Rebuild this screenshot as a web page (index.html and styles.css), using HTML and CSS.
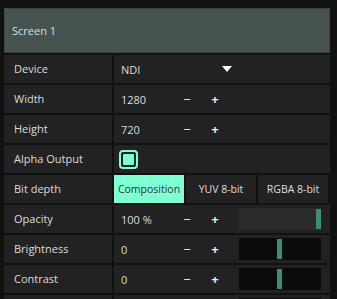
FILE: index.html
```html
<!DOCTYPE html>
<html lang="en">
<head>
  <meta charset="UTF-8">
  <title>Screen 1</title>
  <link rel="stylesheet" href="styles.css">
</head>
<body>
  <div class="panel">
    <div class="header">Screen 1</div>

    <div class="rows">
      <div class="row">
        <div class="label">Device</div>
        <div class="value">
          <span class="num">NDI</span>
          <svg class="caret" width="10" height="6" viewBox="0 0 10 6"><path d="M0 0 H10 L5 6 Z" fill="#fff"/></svg>
        </div>
      </div>

      <div class="row">
        <div class="label">Width</div>
        <div class="value">
          <span class="num">1280</span>
          <span class="step">&minus;</span>
          <span class="step plus">+</span>
        </div>
      </div>

      <div class="row">
        <div class="label">Height</div>
        <div class="value">
          <span class="num">720</span>
          <span class="step">&minus;</span>
          <span class="step plus">+</span>
        </div>
      </div>

      <div class="row">
        <div class="label">Alpha Output</div>
        <div class="value">
          <span class="check"><span></span></span>
        </div>
      </div>

      <div class="row">
        <div class="label">Bit depth</div>
        <div class="value tabs">
          <button class="tab active">Composition</button>
          <button class="tab">YUV 8-bit</button>
          <button class="tab">RGBA 8-bit</button>
        </div>
      </div>

      <div class="row">
        <div class="label">Opacity</div>
        <div class="value">
          <span class="num">100 %</span>
          <span class="step">&minus;</span>
          <span class="step plus">+</span>
          <div class="slider"><div class="fill" style="width: 100%"></div><div class="knob" style="left: 77px"></div></div>
        </div>
      </div>

      <div class="row">
        <div class="label">Brightness</div>
        <div class="value">
          <span class="num">0</span>
          <span class="step">&minus;</span>
          <span class="step plus">+</span>
          <div class="slider"><div class="knob" style="left: 38px"></div></div>
        </div>
      </div>

      <div class="row">
        <div class="label">Contrast</div>
        <div class="value">
          <span class="num">0</span>
          <span class="step">&minus;</span>
          <span class="step plus">+</span>
          <div class="slider"><div class="knob" style="left: 38px"></div></div>
        </div>
      </div>

      <!-- next row is cut off by the window, only the slider top shows -->
      <div class="row">
        <div class="label"></div>
        <div class="value">
          <span class="num"></span>
          <span class="step"></span>
          <span class="step plus"></span>
          <div class="slider"><div class="knob red" style="left: 39px"></div></div>
        </div>
      </div>
    </div>
  </div>
</body>
</html>
```

FILE: styles.css
```css
body {
  margin: 0;
  background-color: #111;
  font-family: 'Open Sans', sans-serif;
  font-size: 11px;
  color: #ddd;
  overflow: hidden;
}

.panel {
  width: 326px;
  margin-left: 4px;
  padding-top: 8px;
}

.header {
  height: 43px;
  line-height: 43px;
  padding-left: 7px;
  background-color: #46534f;
  border: 1px solid #3a4541;
  color: #ddd;
}

.rows {
  display: flex;
  flex-direction: column;
  gap: 2px;
  margin-top: 2px;
}

.row {
  display: flex;
  gap: 2px;
  height: 28px;
}

.label {
  width: 98px;
  padding-left: 10px;
  background-color: #222;
  line-height: 28px;
}

.value {
  flex: 1;
  display: flex;
  align-items: center;
  padding-left: 7px;
  background-color: #222;
}

.num {
  width: 58px;
}

.caret {
  margin-left: 43px;
}

.step {
  width: 16px;
  text-align: center;
  font-size: 13px;
  color: #eee;
}

.step.plus {
  margin-left: 12px;
  font-weight: bold;
}

.check {
  width: 11px;
  height: 11px;
  border: 2px solid #7fffd4;
  border-radius: 4px;
  padding: 2px;
  margin-left: -2px;
  display: flex;
}

.check span {
  flex: 1;
  background-color: #7fffd4;
  border-radius: 1px;
}

.tabs {
  padding-left: 0;
  gap: 2px;
  align-items: stretch;
  background-color: #111;
}

.tab {
  width: 70px;
  padding: 0;
  border: none;
  background-color: #222;
  color: #ddd;
  font-family: 'Open Sans', sans-serif;
  font-size: 10.5px;
}

.tab.active {
  background-color: #7fffd4;
  color: #333;
}

.tabs::after {
  content: '';
  flex: 1;
  background-color: #222;
}

.slider {
  position: relative;
  width: 82px;
  height: 22px;
  margin-left: 16px;
  background-color: #0b0b0b;
}

.fill {
  height: 100%;
  background-color: #2b2b2b;
}

.knob {
  position: absolute;
  top: 1px;
  width: 5px;
  height: 20px;
  background-color: #3f8d72;
}

.knob.red {
  background-color: #c01818;
}
```
